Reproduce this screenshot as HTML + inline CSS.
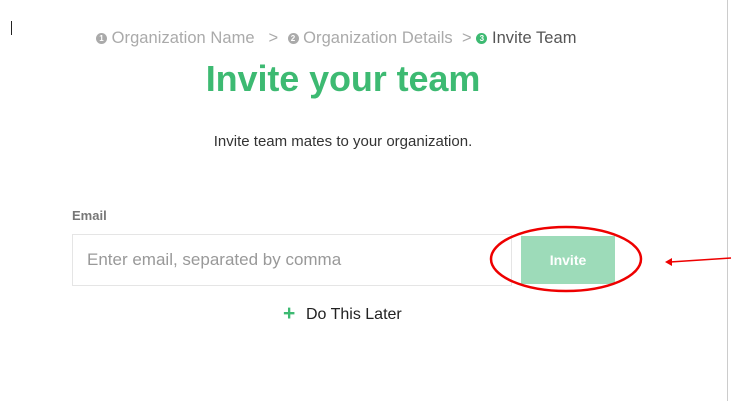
<!DOCTYPE html>
<html><head><style>
body{margin:0;width:733px;height:401px;background:#fff;position:relative;overflow:hidden;font-family:"Liberation Sans",sans-serif}
.a{position:absolute;white-space:nowrap}
.n{display:inline-block;width:11px;height:11px;border-radius:50%;color:#fff;font-size:8px;font-weight:bold;text-align:center;line-height:11px;vertical-align:2px;letter-spacing:0}
</style></head><body>
<div class="a" style="left:11px;top:21px;width:1px;height:14px;background:#222"></div>
<div class="a" style="left:727px;top:0;width:1px;height:401px;background:#ccc"></div>
<div class="a" style="left:96px;top:29px;font-size:16.5px;letter-spacing:0.05px;color:#aaa"><span class="n" style="background:#aaa">1</span> Organization Name &nbsp; &gt; &nbsp;<span class="n" style="background:#aaa">2</span> Organization Details &nbsp;&gt; <span class="n" style="background:#3dba72">3</span> <span style="color:#555">Invite Team</span></div>
<div class="a" style="left:0;width:686px;text-align:center;top:58px;font-size:36px;font-weight:bold;letter-spacing:-0.1px;color:#3dba72">Invite your team</div>
<div class="a" style="left:0;width:686px;text-align:center;top:133px;font-size:15px;color:#333">Invite team mates to your organization.</div>
<div class="a" style="left:72px;top:208px;font-size:13px;font-weight:bold;color:#777">Email</div>
<div class="a" style="left:72px;top:234px;width:440px;height:52px;border:1px solid #e5e5e5;box-sizing:border-box"></div>
<div class="a" style="left:87px;top:250px;font-size:17px;color:#999">Enter email, separated by comma</div>
<div class="a" style="left:521px;top:236px;width:94px;height:48px;background:#9ddbb9;color:#fff;font-size:14px;font-weight:bold;text-align:center;line-height:48px">Invite</div>
<div class="a" style="left:283px;top:302px;font-size:21px;font-weight:bold;color:#3dba72">+</div>
<div class="a" style="left:306px;top:306px;font-size:16px;color:#222">Do This Later</div>
<svg class="a" style="left:0;top:0" width="733" height="401"><ellipse cx="566" cy="259" rx="75" ry="32" fill="none" stroke="#e00" stroke-width="2.5"/><line x1="731" y1="258" x2="670" y2="262" stroke="#e00" stroke-width="1.5"/><polygon points="665,262 672,258 672,266" fill="#e00"/></svg>
</body></html>
